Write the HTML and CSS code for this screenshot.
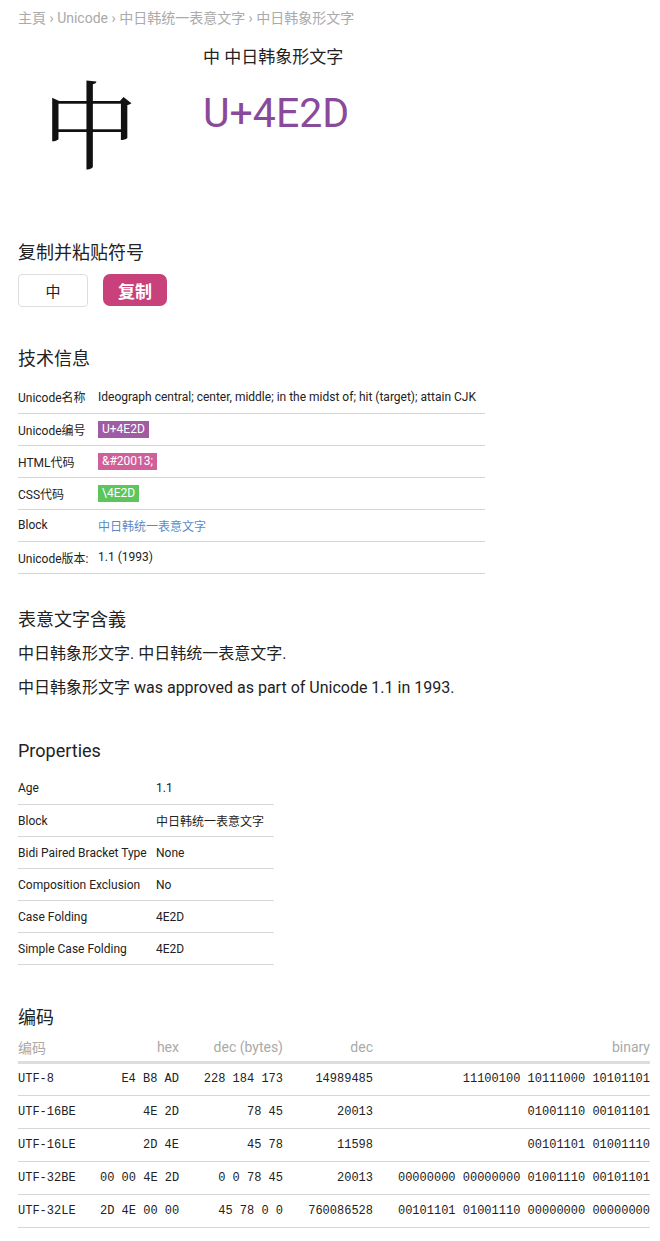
FILE: index.html
```html
<!DOCTYPE html>
<html lang="zh">
<head>
<meta charset="utf-8">
<title>中 U+4E2D</title>
<link rel="stylesheet" href="styles.css">
</head>
<body>
<div class="page">
  <nav class="crumbs">主頁 › Unicode › 中日韩统一表意文字 › 中日韩象形文字</nav>

  <div class="hero">
    <div class="glyph">中</div>
    <div class="hero-text">
      <div class="hero-name">中 中日韩象形文字</div>
      <div class="hero-code">U+4E2D</div>
    </div>
  </div>

  <h2 class="h-copy">复制并粘贴符号</h2>
  <div class="copy-row">
    <div class="copy-box">中</div>
    <button class="copy-btn">复制</button>
  </div>

  <h2 class="h-tech">技术信息</h2>
  <table class="info tech">
    <tr><td class="k">Unicode名称</td><td>Ideograph central; center, middle; in the midst of; hit (target); attain CJK</td></tr>
    <tr><td class="k">Unicode编号</td><td><span class="badge b-purple">U+4E2D</span></td></tr>
    <tr><td class="k">HTML代码</td><td><span class="badge b-pink">&amp;#20013;</span></td></tr>
    <tr><td class="k">CSS代码</td><td><span class="badge b-green">\4E2D</span></td></tr>
    <tr><td class="k">Block</td><td><a class="link" href="#">中日韩统一表意文字</a></td></tr>
    <tr><td class="k">Unicode版本:</td><td>1.1 (1993)</td></tr>
  </table>

  <h2 class="h-mean">表意文字含義</h2>
  <p class="para">中日韩象形文字. 中日韩统一表意文字.</p>
  <p class="para">中日韩象形文字 was approved as part of Unicode 1.1 in 1993.</p>

  <h2 class="h-props">Properties</h2>
  <table class="info props">
    <tr><td class="k">Age</td><td>1.1</td></tr>
    <tr><td class="k">Block</td><td>中日韩统一表意文字</td></tr>
    <tr><td class="k">Bidi Paired Bracket Type</td><td>None</td></tr>
    <tr><td class="k">Composition Exclusion</td><td>No</td></tr>
    <tr><td class="k">Case Folding</td><td>4E2D</td></tr>
    <tr><td class="k">Simple Case Folding</td><td>4E2D</td></tr>
  </table>

  <h2 class="h-enc">编码</h2>
  <table class="enc">
    <colgroup><col class="c1"><col class="c2"><col class="c3"><col class="c4"><col></colgroup>
    <thead>
      <tr><th class="l">编码</th><th>hex</th><th>dec (bytes)</th><th>dec</th><th>binary</th></tr>
    </thead>
    <tbody>
      <tr><td class="l">UTF-8</td><td>E4 B8 AD</td><td>228 184 173</td><td>14989485</td><td>11100100 10111000 10101101</td></tr>
      <tr><td class="l">UTF-16BE</td><td>4E 2D</td><td>78 45</td><td>20013</td><td>01001110 00101101</td></tr>
      <tr><td class="l">UTF-16LE</td><td>2D 4E</td><td>45 78</td><td>11598</td><td>00101101 01001110</td></tr>
      <tr><td class="l">UTF-32BE</td><td>00 00 4E 2D</td><td>0 0 78 45</td><td>20013</td><td>00000000 00000000 01001110 00101101</td></tr>
      <tr><td class="l">UTF-32LE</td><td>2D 4E 00 00</td><td>45 78 0 0</td><td>760086528</td><td>00101101 01001110 00000000 00000000</td></tr>
    </tbody>
  </table>
</div>
</body>
</html>
```

FILE: styles.css
```css
* { box-sizing: border-box; }
html, body { margin: 0; padding: 0; background: #fff; }
body {
  font-family: Roboto, "Noto Sans CJK SC", sans-serif;
  color: #222;
}
.page { padding: 10px 10px 0 18px; }

.crumbs {
  font-size: 14px;
  line-height: 16px;
  color: #aaa;
}

.hero { display: flex; margin-top: 19px; }
.glyph {
  width: 144px;
  margin-top: 27px;
  text-align: center;
  font-family: "Noto Serif CJK SC", "Noto Sans CJK SC", serif;
  font-weight: 400;
  font-size: 96px;
  line-height: 96px;
  color: #111;
}
.hero-text { margin-left: 41px; }
.hero-name { font-size: 17px; line-height: 24px; color: #222; }
.hero-code {
  margin-top: 20px;
  font-size: 41px;
  line-height: 48px;
  color: #8a4a9c;
}

h2 {
  margin: 0;
  font-size: 18px;
  line-height: 24px;
  font-weight: 400;
  color: #222;
}
.h-copy { margin-top: 73px; }
.copy-row { display: flex; gap: 15px; margin-top: 9px; }
.copy-box {
  width: 70px;
  height: 33px;
  border: 1px solid #ddd;
  border-radius: 4px;
  display: flex;
  align-items: center;
  justify-content: center;
  font-size: 15px;
  color: #222;
}
.copy-btn {
  width: 64px;
  height: 32px;
  border: 0;
  border-radius: 7px;
  background: #c9417a;
  color: #fff;
  font-family: Roboto, "Noto Sans CJK SC", sans-serif;
  font-weight: 700;
  font-size: 17px;
  padding: 0;
}

.h-tech { margin-top: 40px; }
table { border-collapse: collapse; }
.info { margin-top: 10px; font-size: 12px; }
.info td {
  height: 32px;
  padding: 0;
  border-bottom: 1px solid #d6d6d6;
  vertical-align: middle;
  white-space: nowrap;
}
.tech { width: 467px; }
.tech .k { width: 80px; }
.props { width: 256px; margin-top: 10px; }
.props .k { width: 138px; }

.badge {
  display: inline-block;
  height: 17px;
  line-height: 17px;
  padding: 0 4px;
  color: #fff;
  font-size: 12px;
}
.b-purple { background: #9f5ca3; }
.b-pink { background: #d0609a; }
.b-green { background: #5cc65c; }
.link { color: #5a8ac6; text-decoration: none; }

.h-mean { margin-top: 34px; }
.para { margin: 10px 0 0; font-size: 16px; line-height: 24px; color: #222; }

.h-props { margin-top: 39px; }

.h-enc { margin-top: 41px; }
.enc {
  width: 632px;
  margin-top: 4px;
  table-layout: fixed;
}
.enc .c1 { width: 82px; }
.enc .c2 { width: 79px; }
.enc .c3 { width: 104px; }
.enc .c4 { width: 90px; }
.enc th {
  height: 28px;
  padding: 0;
  font-size: 14px;
  font-weight: 400;
  color: #aaa;
  text-align: right;
  border-bottom: 3px solid #ddd;
  vertical-align: middle;
}
.enc td {
  height: 33px;
  padding: 0;
  font-family: "Liberation Mono", monospace;
  font-size: 12px;
  color: #222;
  text-align: right;
  border-bottom: 1px solid #d6d6d6;
  vertical-align: middle;
  white-space: nowrap;
}
.enc .l { text-align: left; }
```
